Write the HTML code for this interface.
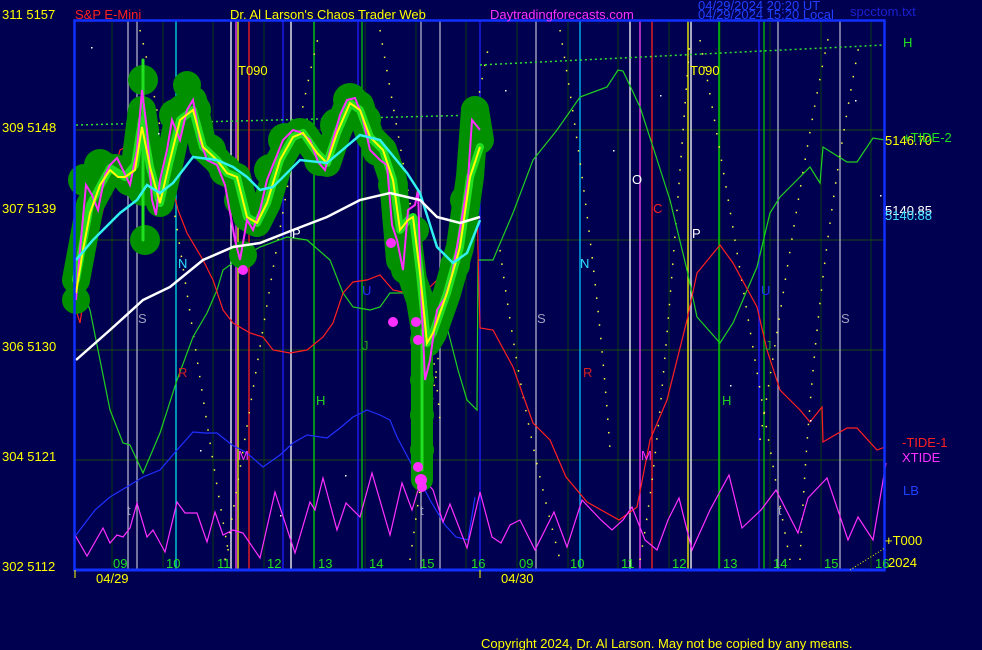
<!DOCTYPE html><html><head><meta charset="utf-8"><style>
body{margin:0;background:#000050;width:982px;height:650px;overflow:hidden}
svg{display:block}
text{font-family:"Liberation Sans",sans-serif;font-size:13px}
</style></head><body>
<svg width="982" height="650" viewBox="0 0 982 650" xmlns="http://www.w3.org/2000/svg">
<rect width="982" height="650" fill="#000050"/>
<g stroke="#0a3a10" stroke-width="1">
<line x1="112" y1="20" x2="112" y2="570"/><line x1="163" y1="20" x2="163" y2="570"/><line x1="213" y1="20" x2="213" y2="570"/><line x1="264" y1="20" x2="264" y2="570"/><line x1="314" y1="20" x2="314" y2="570"/><line x1="365" y1="20" x2="365" y2="570"/><line x1="416" y1="20" x2="416" y2="570"/><line x1="466" y1="20" x2="466" y2="570"/><line x1="517" y1="20" x2="517" y2="570"/><line x1="568" y1="20" x2="568" y2="570"/><line x1="618" y1="20" x2="618" y2="570"/><line x1="669" y1="20" x2="669" y2="570"/><line x1="720" y1="20" x2="720" y2="570"/><line x1="770" y1="20" x2="770" y2="570"/><line x1="821" y1="20" x2="821" y2="570"/><line x1="871" y1="20" x2="871" y2="570"/>
</g>
<g stroke="#1a4a10" stroke-width="1">
<line x1="74" y1="130" x2="885" y2="130"/><line x1="74" y1="240" x2="885" y2="240"/><line x1="74" y1="350" x2="885" y2="350"/><line x1="74" y1="460" x2="885" y2="460"/>
</g>
<g stroke-width="1.3">
<line x1="128" y1="20" x2="128" y2="570" stroke="#b0b0c8"/>
<line x1="137" y1="20" x2="137" y2="570" stroke="#b0b0c8"/>
<line x1="176" y1="20" x2="176" y2="570" stroke="#00e0e0"/>
<line x1="231" y1="20" x2="231" y2="570" stroke="#ffffff"/>
<line x1="236" y1="20" x2="236" y2="570" stroke="#ff40ff"/>
<line x1="238" y1="20" x2="238" y2="570" stroke="#ffff00"/>
<line x1="249" y1="20" x2="249" y2="570" stroke="#ff2020"/>
<line x1="283" y1="20" x2="283" y2="570" stroke="#2020ff"/>
<line x1="291" y1="20" x2="291" y2="570" stroke="#ffffff"/>
<line x1="314" y1="20" x2="314" y2="570" stroke="#00e000"/>
<line x1="358" y1="20" x2="358" y2="570" stroke="#2020ff"/>
<line x1="362" y1="20" x2="362" y2="570" stroke="#00c000"/>
<line x1="421" y1="20" x2="421" y2="570" stroke="#b0b0c8"/>
<line x1="440" y1="20" x2="440" y2="570" stroke="#b0b0c8"/>
<line x1="480" y1="20" x2="480" y2="570" stroke="#2020ff"/>
<line x1="536" y1="20" x2="536" y2="570" stroke="#b0b0c8"/>
<line x1="580" y1="20" x2="580" y2="570" stroke="#00c0ff"/>
<line x1="630" y1="20" x2="630" y2="570" stroke="#ffffff"/>
<line x1="640" y1="20" x2="640" y2="570" stroke="#ff40ff"/>
<line x1="652" y1="20" x2="652" y2="570" stroke="#ff2020"/>
<line x1="688" y1="20" x2="688" y2="570" stroke="#ffff00"/>
<line x1="691" y1="20" x2="691" y2="570" stroke="#ffffff"/>
<line x1="719" y1="20" x2="719" y2="570" stroke="#00e000"/>
<line x1="759" y1="20" x2="759" y2="570" stroke="#2020ff"/>
<line x1="764" y1="20" x2="764" y2="570" stroke="#00c000"/>
<line x1="778" y1="20" x2="778" y2="570" stroke="#b0b0c8"/>
<line x1="840" y1="20" x2="840" y2="570" stroke="#b0b0c8"/>
</g>
<g fill="none" stroke="#ffff40" stroke-width="1.5" stroke-dasharray="1.5 12">
<path d="M140 30 C170 150 200 400 230 560"/>
<path d="M225 560 C260 350 290 150 320 30"/>
<path d="M410 560 C440 350 460 180 490 40"/>
<path d="M380 30 C400 150 430 300 440 420"/>
<path d="M500 250 C520 400 540 480 560 560"/>
<path d="M560 30 C580 150 600 300 610 450"/>
<path d="M640 560 C660 450 670 300 690 40"/>
<path d="M700 40 C730 200 760 400 790 560"/>
<path d="M760 440 C790 250 810 120 830 30"/>
<path d="M800 560 C810 350 830 200 860 40"/>
</g>
<g fill="none" stroke="#30e030" stroke-width="1.5" stroke-dasharray="2 3">
<path d="M76 125 L480 115"/><path d="M480 65 L884 45"/>
</g>
<polyline fill="none" stroke="#2030ff" stroke-width="1.2" points="76,535 95,510 110,497 130,485 143,477 160,470 177,450 193,432 205,433 217,433 232,445 247,453 263,467 280,455 293,443 307,435 327,438 340,428 353,417 367,410 380,415 390,420 397,437 413,467 430,500 445,525 456,537 468,540 475,497"/>
<polyline fill="none" stroke="#20d020" stroke-width="1.2" points="76,273 90,310 100,360 110,410 123,443 130,445 143,473 160,433 177,380 193,337 207,313 217,290 223,270 237,260 260,247 287,237 307,240 330,260 343,293 353,307 370,310 380,307 390,293 403,293 420,297 430,310 447,327 458,370 467,400 477,410 478,260 493,260 513,213 533,160 557,130 580,97 607,87 618,70 623,71 640,107 653,147 670,200 687,270 697,317 720,343 733,323 757,267 770,213 780,197 800,177 810,167 820,183 823,147 847,162 857,162 873,138 885,140"/>
<polyline fill="none" stroke="#ff2020" stroke-width="1.2" points="76,310 80,323 87,277 103,210 120,150 130,145 143,117 157,143 170,177 178,210 187,233 203,260 213,280 223,310 233,323 250,333 263,337 273,350 290,353 307,350 323,337 333,323 343,293 353,282 367,280 380,275 393,290 407,293 420,297 437,280 453,243 467,197 477,180 478,250 480,328 493,330 513,367 533,423 550,440 566,477 587,502 619,520 637,507 650,440 667,400 687,320 697,273 720,245 733,263 757,307 767,350 780,390 800,410 810,422 822,407 823,442 847,428 857,428 877,450 885,447"/>
<polyline fill="none" stroke="#ff30ff" stroke-width="1.2" points="75,535 87,556 103,528 110,543 117,535 123,537 130,528 137,503 147,537 153,530 165,552 177,502 185,513 197,513 207,542 215,512 223,535 233,530 243,533 260,558 275,492 295,553 310,502 315,510 323,478 337,530 346,503 360,517 372,473 390,535 402,483 412,510 422,477 433,490 443,522 450,504 467,548 480,492 492,537 501,543 510,525 520,520 535,550 554,512 567,547 582,500 601,520 612,530 623,520 632,507 645,540 657,550 668,520 679,498 692,550 710,510 729,475 742,528 761,510 776,490 798,533 808,498 827,478 848,540 858,517 873,540 886,463"/>
<!-- glow -->
<g fill="#009000">
<circle cx="76" cy="300" r="14"/><circle cx="84" cy="180" r="16"/><circle cx="100" cy="165" r="16"/><circle cx="115" cy="170" r="16"/><circle cx="130" cy="180" r="16"/><circle cx="143" cy="80" r="15"/><circle cx="143" cy="130" r="16"/><circle cx="143" cy="190" r="16"/><circle cx="145" cy="240" r="15"/><circle cx="160" cy="195" r="15"/><circle cx="175" cy="115" r="16"/><circle cx="187" cy="85" r="14"/><circle cx="195" cy="110" r="16"/><circle cx="210" cy="150" r="16"/><circle cx="225" cy="170" r="16"/><circle cx="240" cy="200" r="16"/><circle cx="243" cy="255" r="14"/><circle cx="255" cy="220" r="16"/><circle cx="270" cy="170" r="16"/><circle cx="285" cy="140" r="17"/><circle cx="300" cy="135" r="17"/><circle cx="320" cy="160" r="16"/><circle cx="337" cy="125" r="17"/><circle cx="350" cy="100" r="17"/><circle cx="365" cy="120" r="16"/><circle cx="378" cy="150" r="16"/><circle cx="393" cy="185" r="15"/><circle cx="400" cy="235" r="15"/><circle cx="405" cy="270" r="14"/><circle cx="415" cy="230" r="14"/><circle cx="420" cy="300" r="14"/><circle cx="425" cy="340" r="15"/><circle cx="422" cy="380" r="12"/><circle cx="422" cy="415" r="12"/><circle cx="422" cy="450" r="12"/><circle cx="440" cy="310" r="14"/><circle cx="455" cy="265" r="15"/><circle cx="465" cy="200" r="15"/><circle cx="475" cy="110" r="14"/><circle cx="478" cy="140" r="14"/>
</g>
<g fill="none" stroke-linecap="round" stroke-linejoin="round">
<polyline stroke="#009000" stroke-width="28" points="76,280 90,205 110,168 125,177 135,165 142,110 150,167 160,203 170,160 180,110 193,100 203,147 217,160 227,173 237,177 247,217 257,223 267,203 280,160 293,137 303,133 317,153 327,163 337,133 350,100 360,105 370,137 383,150 393,180 400,260 408,240 413,280 420,300 427,343 433,333 447,293 460,247 470,177 475,110 480,140"/>
<polyline stroke="#009000" stroke-width="22" points="422,300 422,480"/>
<polyline stroke="#20e020" stroke-width="8" points="76,280 90,205 110,168 125,177 135,165 142,120 150,167 160,203 170,160 180,120 193,110 203,147 217,160 227,173 237,177 247,217 257,223 267,203 280,160 293,137 303,133 317,153 327,163 337,133 350,103 360,110 370,137 383,150 393,180 400,230 408,220 413,217 420,273 427,343 433,333 447,293 460,247 470,177 480,147"/>
<polyline stroke="#20e020" stroke-width="3" points="422,330 422,470"/>
<polyline stroke="#20e020" stroke-width="3" points="143,60 143,240"/>
</g>
<polyline fill="none" stroke="#ff30ff" stroke-width="2" points="76,300 80,250 86,185 92,195 98,210 105,175 110,165 117,158 123,170 130,185 137,150 142,90 147,130 152,200 156,215 160,180 167,150 172,120 180,140 187,110 193,100 200,140 207,160 217,165 225,185 235,240 240,260 247,220 253,230 260,210 267,180 275,160 283,140 293,130 300,132 310,140 318,162 325,170 333,140 340,115 347,100 355,98 362,115 370,150 380,160 387,165 392,225 397,240 403,270 408,210 415,205 418,190 421,290 425,380 430,360 437,310 445,298 452,275 460,230 468,180 472,120 480,130"/>
<polyline fill="none" stroke="#ffff00" stroke-width="2" points="76,293 83,250 90,213 100,185 110,170 118,177 125,177 135,170 142,127 150,167 160,203 170,160 180,120 193,110 203,147 217,160 227,173 237,177 247,217 257,223 267,203 280,160 293,137 303,133 317,153 327,163 337,133 350,103 360,110 370,137 383,150 393,180 400,230 408,220 413,217 420,273 427,343 433,333 447,293 460,247 470,177 480,147"/>
<polyline fill="none" stroke="#30f0f0" stroke-width="2.5" points="76,260 93,240 120,213 137,200 147,185 160,193 173,183 193,157 217,160 233,167 247,177 260,190 273,187 300,160 327,163 360,135 380,140 407,173 420,193 437,247 453,263 467,253 480,220"/>
<polyline fill="none" stroke="#ffffff" stroke-width="2.5" points="76,360 110,330 143,300 170,287 203,260 233,247 260,243 293,230 327,217 360,200 390,193 420,200 437,217 460,223 480,217"/>
<g fill="#ff30ff">
<circle cx="243" cy="270" r="5"/><circle cx="391" cy="243" r="5"/><circle cx="393" cy="322" r="5"/><circle cx="416" cy="322" r="5"/><circle cx="418" cy="340" r="5"/><circle cx="418" cy="467" r="5"/><circle cx="421" cy="480" r="6"/><circle cx="422" cy="487" r="5"/>
</g>
<rect x="74.5" y="20.5" width="810" height="549.5" fill="none" stroke="#1030ff" stroke-width="2.5"/>
<line x1="74" y1="570" x2="885" y2="570" stroke="#1030ff" stroke-width="3"/>
<line x1="75" y1="570" x2="75" y2="578" stroke="#ffff00"/><line x1="480" y1="570" x2="480" y2="578" stroke="#ffff00"/>
<polyline fill="none" stroke="#ffff00" stroke-dasharray="1 2" points="850,570 885,548"/>
<g fill="#ffff00">
<text x="2" y="19">311  5157</text><text x="2" y="132">309  5148</text><text x="2" y="213">307  5139</text><text x="2" y="351">306  5130</text><text x="2" y="461">304  5121</text><text x="2" y="571">302  5112</text>
<text x="96" y="583">04/29</text><text x="501" y="583">04/30</text>
<text x="230" y="19">Dr. Al Larson's Chaos Trader Web</text>
<text x="238" y="75" font-size="12">T090</text><text x="690" y="75" font-size="12">T090</text>
<text x="885" y="145" font-size="12">5146.70</text>
<text x="885" y="215" font-size="12" fill="#ffffff">5140.85</text>
<text x="885" y="545" font-size="12">+T000</text><text x="888" y="567" font-size="12">2024</text>
<text x="481" y="648" font-size="13">Copyright 2024, Dr. Al Larson. May not be copied by any means.</text>
</g>
<text x="885" y="220" font-size="12" fill="#40e0ff">5140.88</text>
<text x="75" y="19" fill="#ff2020">S&amp;P E-Mini</text>
<text x="490" y="19" fill="#ff30ff">Daytradingforecasts.com</text>
<text x="698" y="10" font-size="9" fill="#2040ff">04/29/2024 20:20 UT</text>
<text x="698" y="19" font-size="9" fill="#2040ff">04/29/2024 15:20 Local</text>
<text x="850" y="16" fill="#1a20d0">spcctom.txt</text>
<text x="903" y="47" fill="#20e020">H</text>
<text x="903" y="142" fill="#20e020" font-size="12">+TIDE-2</text>
<text x="902" y="447" fill="#ff2020" font-size="12">-TIDE-1</text>
<text x="902" y="462" fill="#ff30ff" font-size="12">XTIDE</text>
<text x="903" y="495" fill="#2040ff" font-size="12">LB</text>
<g font-size="12">
<text x="138" y="323" fill="#a0a0c0">S</text><text x="537" y="323" fill="#a0a0c0">S</text><text x="841" y="323" fill="#a0a0c0">S</text>
<text x="178" y="268" fill="#30e0ff">N</text><text x="580" y="268" fill="#30e0ff">N</text>
<text x="178" y="377" fill="#d02020">R</text><text x="583" y="377" fill="#d02020">R</text>
<text x="316" y="405" fill="#20d020">H</text><text x="722" y="405" fill="#20d020">H</text>
<text x="292" y="238" fill="#ffffff">P</text><text x="692" y="238" fill="#ffffff">P</text>
<text x="632" y="184" fill="#ffffff">O</text><text x="653" y="213" fill="#ff2020">C</text>
<text x="238" y="460" fill="#ff30ff">M</text><text x="641" y="460" fill="#ff30ff">M</text>
<text x="362" y="350" fill="#20a020">J</text><text x="765" y="350" fill="#20a020">J</text>
<text x="362" y="295" fill="#2030ff">U</text><text x="761" y="295" fill="#2030ff">U</text>
<text x="127" y="515" fill="#a0a0c0" font-size="10">t</text><text x="420" y="515" fill="#a0a0c0" font-size="10">t</text><text x="778" y="515" fill="#a0a0c0" font-size="10">t</text>
</g>
<g fill="#20e020" font-size="13">
<text x="113" y="568">09</text><text x="166" y="568">10</text><text x="217" y="568">11</text><text x="267" y="568">12</text><text x="318" y="568">13</text><text x="369" y="568">14</text><text x="420" y="568">15</text><text x="471" y="568">16</text>
<text x="519" y="568">09</text><text x="570" y="568">10</text><text x="621" y="568">11</text><text x="672" y="568">12</text><text x="723" y="568">13</text><text x="773" y="568">14</text><text x="824" y="568">15</text><text x="875" y="568">16</text>
</g>
<g fill="#ffffff">
<rect x="91" y="47" width="1.5" height="1.5"/><rect x="158" y="133" width="1.5" height="1.5"/><rect x="200" y="450" width="1.5" height="1.5"/><rect x="280" y="515" width="1.5" height="1.5"/><rect x="345" y="475" width="1.5" height="1.5"/><rect x="505" y="90" width="1.5" height="1.5"/><rect x="613" y="150" width="1.5" height="1.5"/><rect x="660" y="95" width="1.5" height="1.5"/><rect x="730" y="385" width="1.5" height="1.5"/><rect x="810" y="420" width="1.5" height="1.5"/><rect x="855" y="100" width="1.5" height="1.5"/><rect x="880" y="195" width="1.5" height="1.5"/>
</g>
</svg>
</body></html>
